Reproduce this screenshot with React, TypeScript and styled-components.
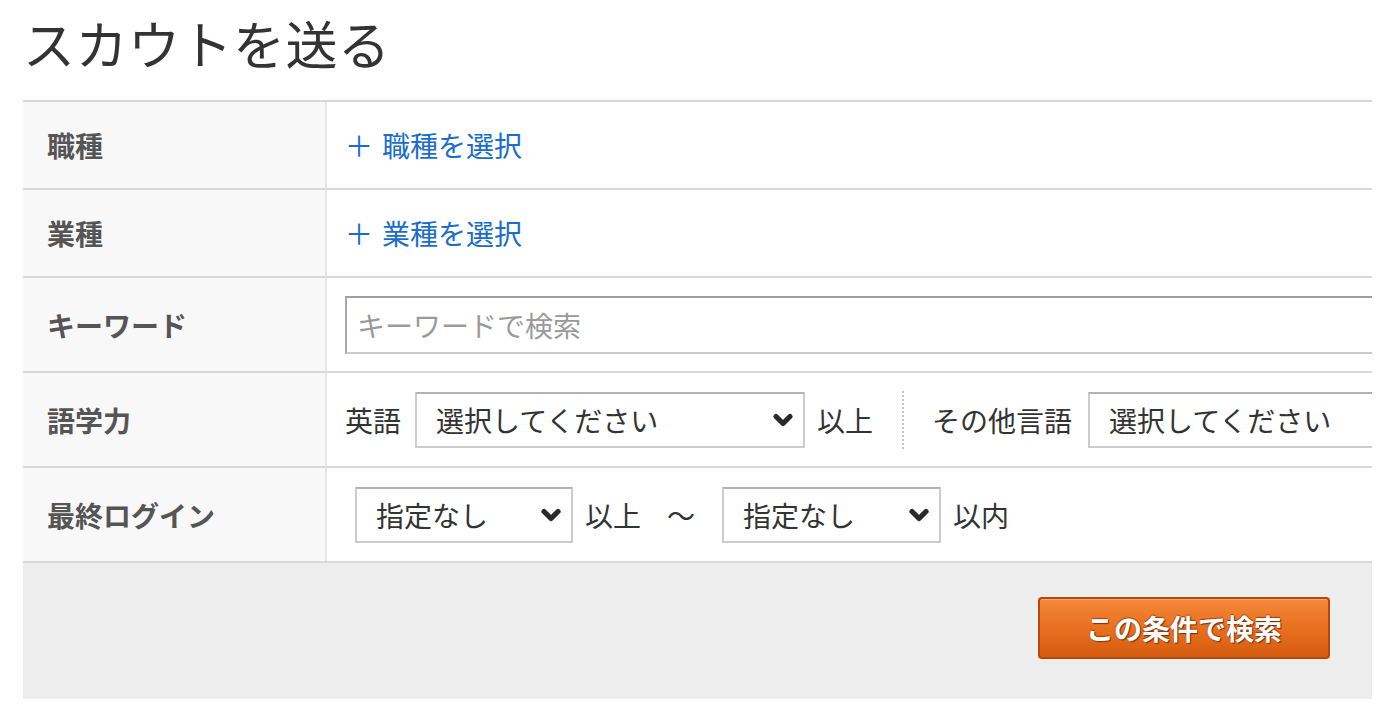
import React from 'react';
import styled, { createGlobalStyle } from 'styled-components';
import { ChevronDown } from 'lucide-react';

const GlobalStyle = createGlobalStyle`
  html, body {
    margin: 0;
    padding: 0;
    background: #fff;
  }
  body {
    font-family: "Noto Sans CJK JP", "Noto Sans", sans-serif;
    color: #333;
  }
`;

const Page = styled.div`
  padding: 17px 0 0 23px;
  width: 1349px;
`;

const Title = styled.h1`
  margin: 0 0 31px;
  font-size: 52px;
  line-height: 52px;
  font-weight: 400;
  color: #333;
  letter-spacing: 0.5px;
`;

const Panel = styled.div`
  width: 1349px;
  overflow: hidden;
  border-top: 2px solid #d6d6d6;
`;

const Row = styled.div<{ $h: number }>`
  display: grid;
  grid-template-columns: 304px minmax(0, 1fr);
  height: ${({ $h }) => $h}px;
  border-bottom: 2px solid #d9d9d9;
`;

const Label = styled.div`
  display: flex;
  align-items: center;
  padding-left: 24px;
  background: #f8f8f8;
  border-right: 2px solid #e6e6e6;
  font-size: 28px;
  font-weight: 700;
  color: #555;
`;

const Cell = styled.div<{ $pad?: number }>`
  display: flex;
  align-items: center;
  padding-left: ${({ $pad }) => $pad ?? 18}px;
  white-space: nowrap;
  font-size: 28px;
  color: #333;
`;

const AddLink = styled.a`
  display: flex;
  align-items: center;
  gap: 9px;
  color: #1a6dcc;
  font-size: 28px;
  text-decoration: none;
  cursor: pointer;
`;

const KeywordInput = styled.input`
  box-sizing: border-box;
  width: 1100px;
  height: 58px;
  flex-shrink: 0;
  padding: 0 10px;
  border: 2px solid #c9c9c9;
  border-top-color: #a0a0a0;
  border-left-color: #a8a8a8;
  font-family: inherit;
  font-size: 28px;
  color: #333;
  outline: none;

  &::placeholder {
    color: #9a9a9a;
  }
`;

const SelectWrap = styled.div<{ $w: number }>`
  position: relative;
  flex-shrink: 0;
  width: ${({ $w }) => $w}px;
  height: 56px;
`;

const NativeSelect = styled.select`
  box-sizing: border-box;
  appearance: none;
  width: 100%;
  height: 100%;
  padding: 0 40px 0 19px;
  border: 2px solid #cccccc;
  border-top-color: #b3b3b3;
  border-radius: 0;
  background: #fff;
  font-family: inherit;
  font-size: 28px;
  color: #333;
  outline: none;
`;

const Chevron = styled.span`
  position: absolute;
  right: 8px;
  top: 50%;
  transform: translateY(-50%);
  display: flex;
  color: #2a2a2a;
  pointer-events: none;
`;

const Text = styled.span<{ $ml?: number; $mr?: number }>`
  margin-left: ${({ $ml }) => $ml ?? 12}px;
  margin-right: ${({ $mr }) => $mr ?? 12}px;
  flex-shrink: 0;
`;

const Divider = styled.span`
  align-self: center;
  width: 0;
  height: 58px;
  margin: 0 28px 0 17px;
  border-left: 2px dotted #c4c4c4;
  flex-shrink: 0;
`;

const Footer = styled.div`
  display: flex;
  justify-content: flex-end;
  align-items: flex-start;
  height: 136px;
  box-sizing: border-box;
  padding: 34px 42px 0 0;
  background: #ededed;
`;

const SearchButton = styled.button`
  width: 292px;
  height: 62px;
  border: 2px solid #b2480b;
  border-radius: 4px;
  background: linear-gradient(to bottom, #f5883a 0%, #e8701f 50%, #d55c10 100%);
  box-shadow: inset 0 1px 0 rgba(255, 255, 255, 0.25);
  color: #fff;
  font-family: inherit;
  font-size: 28px;
  font-weight: 700;
  text-shadow: 1px 1px 1px #7a2e05, 0 -1px 1px rgba(90, 30, 0, 0.6);
  cursor: pointer;
`;

const Select: React.FC<{ width: number; value: string }> = ({ width, value }) => (
  <SelectWrap $w={width}>
    <NativeSelect defaultValue={value}>
      <option>{value}</option>
    </NativeSelect>
    <Chevron>
      <ChevronDown size={28} strokeWidth={4.5} />
    </Chevron>
  </SelectWrap>
);

export default function App() {
  return (
    <>
      <GlobalStyle />
      <Page>
        <Title>スカウトを送る</Title>
        <Panel>
          <Row $h={86}>
            <Label>職種</Label>
            <Cell>
              <AddLink>
                <span>＋</span>
                <span>職種を選択</span>
              </AddLink>
            </Cell>
          </Row>
          <Row $h={86}>
            <Label>業種</Label>
            <Cell>
              <AddLink>
                <span>＋</span>
                <span>業種を選択</span>
              </AddLink>
            </Cell>
          </Row>
          <Row $h={93}>
            <Label>キーワード</Label>
            <Cell>
              <KeywordInput placeholder="キーワードで検索" />
            </Cell>
          </Row>
          <Row $h={93}>
            <Label>語学力</Label>
            <Cell>
              <Text $ml={0} $mr={14}>英語</Text>
              <Select width={390} value="選択してください" />
              <Text>以上</Text>
              <Divider />
              <Text $ml={0} $mr={16}>その他言語</Text>
              <Select width={390} value="選択してください" />
            </Cell>
          </Row>
          <Row $h={93}>
            <Label>最終ログイン</Label>
            <Cell $pad={28}>
              <Select width={218} value="指定なし" />
              <Text>以上</Text>
              <Text $ml={14} $mr={27}>～</Text>
              <Select width={219} value="指定なし" />
              <Text>以内</Text>
            </Cell>
          </Row>
          <Footer>
            <SearchButton>この条件で検索</SearchButton>
          </Footer>
        </Panel>
      </Page>
    </>
  );
}
